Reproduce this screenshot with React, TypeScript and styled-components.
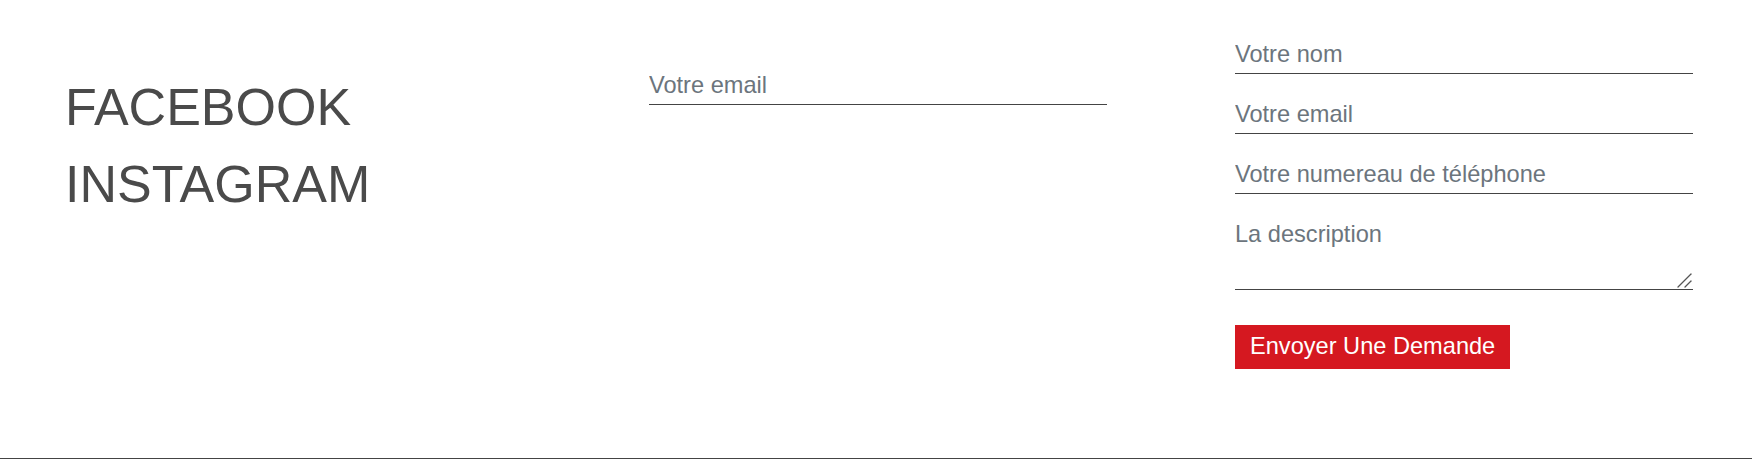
import React from 'react';
import styled, { createGlobalStyle } from 'styled-components';

const GlobalStyle = createGlobalStyle`
  body {
    margin: 0;
    background: #fff;
    font-family: 'Liberation Sans', Arial, sans-serif;
  }
`;

const Footer = styled.footer`
  display: grid;
  grid-template-columns: repeat(3, 458px);
  column-gap: 128px;
  align-items: start;
  height: 458px;
  padding-left: 63px;
  border-bottom: 1px solid #444;
`;

const Column = styled.div<{ top: number; indent?: number }>`
  display: flex;
  flex-direction: column;
  align-items: flex-start;
  padding-top: ${({ top }) => top}px;
  padding-left: ${({ indent = 0 }) => indent}px;
`;

const Social = styled.a`
  display: block;
  font-size: 52px;
  line-height: 58px;
  color: #4a4a4a;
  text-decoration: none;
  & + & {
    margin-top: 19px;
  }
`;

const Form = styled.form`
  display: flex;
  flex-direction: column;
  align-items: flex-start;
  gap: 26px;
  width: 100%;
`;

const fieldStyle = `
  box-sizing: content-box;
  width: 100%;
  margin: 0;
  padding: 0 0 5px;
  border: none;
  border-bottom: 1px solid #444;
  border-radius: 0;
  background: transparent;
  font-family: 'Liberation Sans', Arial, sans-serif;
  font-size: 23.6px;
  line-height: 28px;
  color: #333;
  outline: none;
  &::placeholder {
    color: #6c757d;
    opacity: 1;
  }
`;

const Field = styled.input`
  ${fieldStyle}
  height: 28px;
`;

const AreaWrap = styled.div`
  position: relative;
  width: 100%;
`;

const Area = styled.textarea`
  ${fieldStyle}
  display: block;
  box-sizing: border-box;
  height: 70px;
  resize: none;
`;

const Grip = styled.svg`
  position: absolute;
  right: 1px;
  bottom: 2px;
  width: 16px;
  height: 16px;
  pointer-events: none;
`;

const SendButton = styled.button`
  margin-top: 9px;
  padding: 7px 15px 9px;
  border: none;
  border-radius: 0;
  background: #d51820;
  color: #fff;
  font-family: 'Liberation Sans', Arial, sans-serif;
  font-size: 23.6px;
  line-height: 28px;
  cursor: pointer;
`;

export default function App() {
  return (
    <>
      <GlobalStyle />
      <Footer>
        <Column top={78} indent={2}>
          <Social href="#">FACEBOOK</Social>
          <Social href="#">INSTAGRAM</Social>
        </Column>
        <Column top={71}>
          <Form onSubmit={(e) => e.preventDefault()}>
            <Field type="email" placeholder="Votre email" />
          </Form>
        </Column>
        <Column top={40}>
          <Form onSubmit={(e) => e.preventDefault()}>
            <Field type="text" placeholder="Votre nom" />
            <Field type="email" placeholder="Votre email" />
            <Field type="tel" placeholder="Votre numereau de téléphone" />
            <AreaWrap>
              <Area placeholder="La description" />
              <Grip viewBox="0 0 16 16" aria-hidden="true">
                <g stroke="#555" strokeWidth="1.3" strokeLinecap="round">
                  <line x1="2" y1="15" x2="15" y2="2" />
                  <line x1="9" y1="15" x2="15" y2="9" />
                </g>
              </Grip>
            </AreaWrap>
            <SendButton type="submit">Envoyer Une Demande</SendButton>
          </Form>
        </Column>
      </Footer>
    </>
  );
}
